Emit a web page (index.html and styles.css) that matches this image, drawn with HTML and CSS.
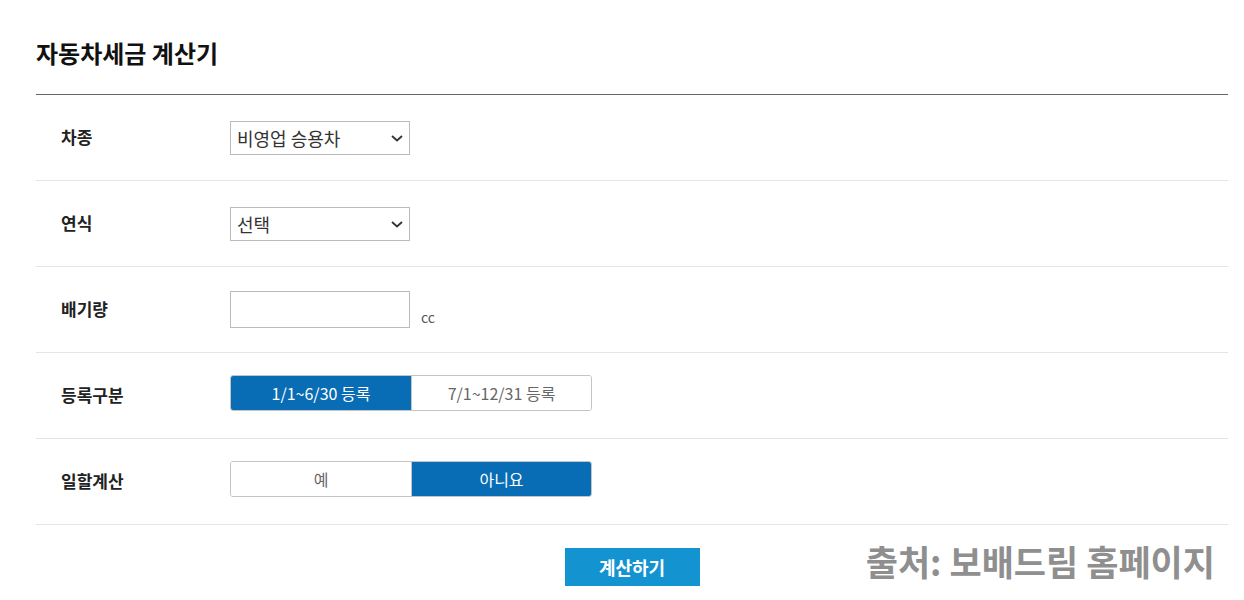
FILE: index.html
```html
<!DOCTYPE html>
<html>
<head>
<meta charset="utf-8">
<title>자동차세금 계산기</title>
<link rel="stylesheet" href="styles.css">
</head>
<body>
<div class="calc">
  <h2 class="calc-title">자동차세금 계산기</h2>

  <div class="row">
    <div class="label">차종</div>
    <div class="field">
      <div class="select">
        <span>비영업 승용차</span>
        <svg width="14" height="9" viewBox="0 0 14 9"><path d="M2 2 L7 6.5 L12 2" fill="none" stroke="#333" stroke-width="1.8"/></svg>
      </div>
    </div>
  </div>

  <div class="row">
    <div class="label">연식</div>
    <div class="field">
      <div class="select">
        <span>선택</span>
        <svg width="14" height="9" viewBox="0 0 14 9"><path d="M2 2 L7 6.5 L12 2" fill="none" stroke="#333" stroke-width="1.8"/></svg>
      </div>
    </div>
  </div>

  <div class="row">
    <div class="label">배기량</div>
    <div class="field field-cc">
      <input class="text-input" type="text">
      <span class="unit">cc</span>
    </div>
  </div>

  <div class="row">
    <div class="label">등록구분</div>
    <div class="field">
      <div class="toggle">
        <span class="opt on">1/1~6/30 등록</span>
        <span class="opt">7/1~12/31 등록</span>
      </div>
    </div>
  </div>

  <div class="row">
    <div class="label">일할계산</div>
    <div class="field">
      <div class="toggle">
        <span class="opt">예</span>
        <span class="opt on">아니요</span>
      </div>
    </div>
  </div>

  <div class="actions">
    <button class="btn-calc">계산하기</button>
    <div class="source">출처: 보배드림 홈페이지</div>
  </div>
</div>
</body>
</html>
```

FILE: styles.css
```css
body {
    margin: 0;
    background: #fff;
    font-family: "Noto Sans CJK KR", "Noto Sans", sans-serif;
    color: #222;
}

.calc {
    width: 1192px;
    margin-left: 36px;
}

.calc-title {
    margin: 0;
    height: 95px;
    box-sizing: border-box;
    padding-top: 37px;
    font-size: 24px;
    line-height: 32px;
    font-weight: bold;
    color: #111;
    border-bottom: 1px solid #666;
}

.row {
    display: flex;
    align-items: center;
    height: 85px;
    border-bottom: 1px solid #e5e5e5;
}

.label {
    width: 169px;
    padding-left: 25px;
    margin-top: -2px;
    font-size: 17px;
    font-weight: bold;
    color: #222;
}

.field {
    display: flex;
    align-items: center;
}

.select {
    width: 180px;
    height: 34px;
    box-sizing: border-box;
    border: 1px solid #bbb;
    display: flex;
    align-items: center;
    justify-content: space-between;
    padding: 0 5px 0 6px;
    font-size: 18px;
    color: #333;
    margin-top: 1px;
}

.field-cc {
    align-items: flex-end;
    margin-top: -1px;
}

.text-input {
    width: 180px;
    height: 37px;
    box-sizing: border-box;
    border: 1px solid #bbb;
    margin: 0;
    font-family: inherit;
}

.unit {
    margin-left: 11px;
    font-size: 14px;
    color: #555;
    line-height: 16px;
    margin-bottom: 3px;
}

.toggle {
    display: flex;
    border: 1px solid #c4c4c4;
    border-radius: 3px;
    overflow: hidden;
    margin-top: -5px;
}

.opt {
    width: 180px;
    height: 34px;
    display: flex;
    align-items: center;
    justify-content: center;
    font-size: 16px;
    color: #666;
    background: #fff;
}

.opt + .opt {
    width: 179px;
    border-left: 1px solid #c4c4c4;
}

.opt.on {
    background: #086db5;
    color: #fff;
}

.actions {
    position: relative;
    display: flex;
    justify-content: center;
    padding-top: 23px;
}

.btn-calc {
    width: 135px;
    height: 38px;
    border: 0;
    background: #1493d1;
    color: #fff;
    font-family: inherit;
    font-size: 18px;
    font-weight: bold;
}

.source {
    position: absolute;
    right: 13px;
    top: 10px;
    font-size: 35px;
    font-weight: bold;
    color: #8f8f8f;
    letter-spacing: 0;
}
```
